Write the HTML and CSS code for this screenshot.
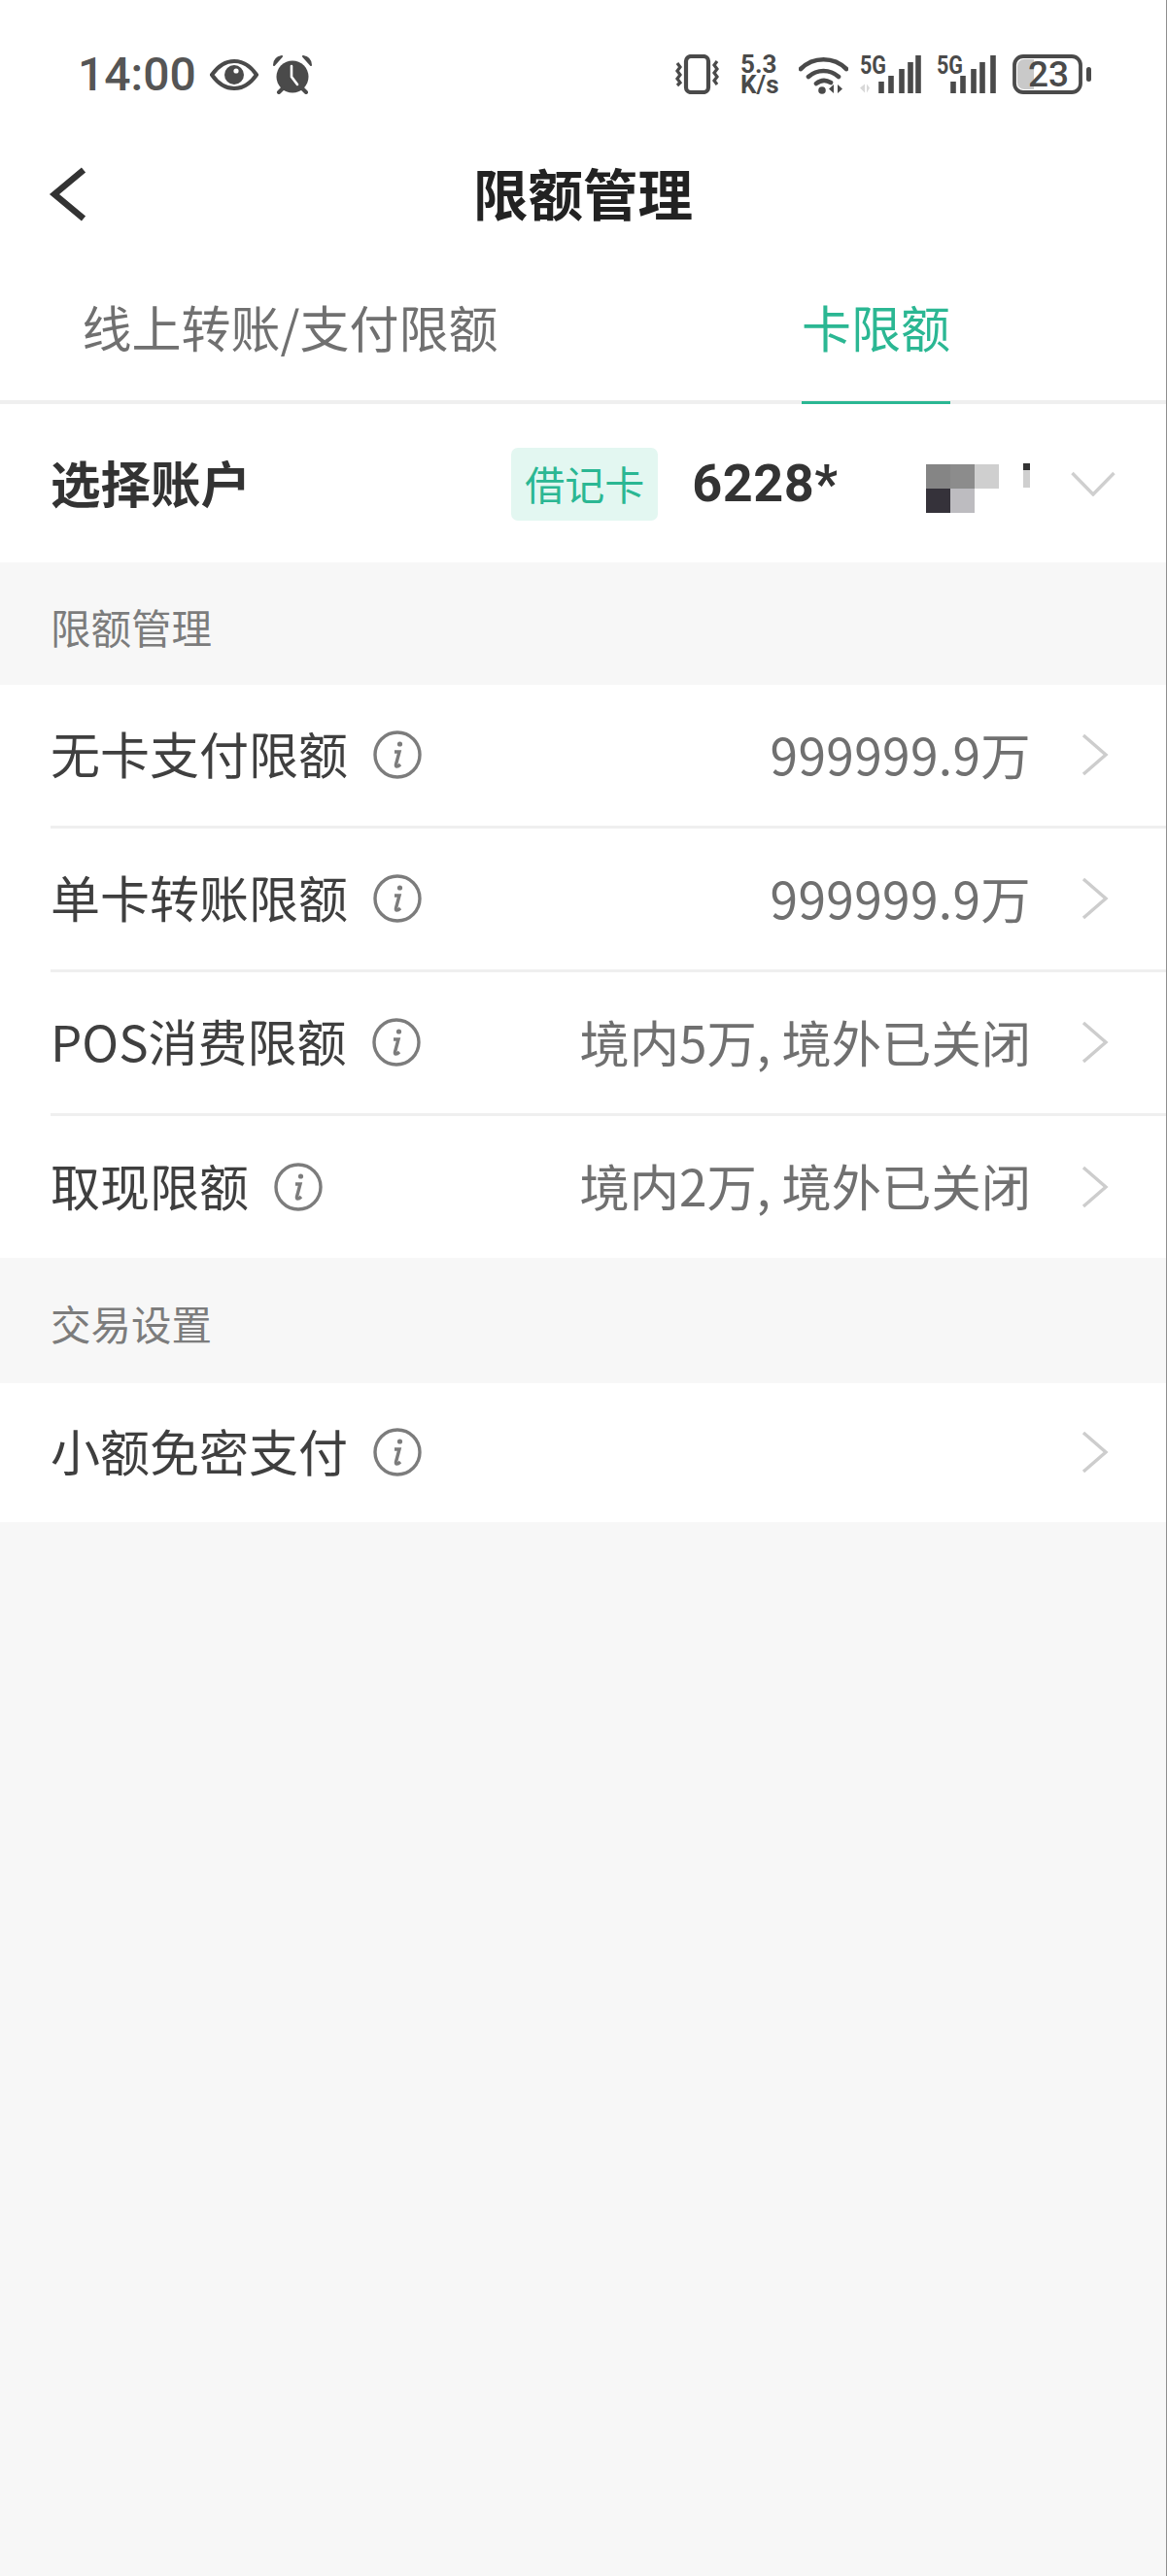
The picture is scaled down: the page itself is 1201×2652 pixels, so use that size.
FILE: index.html
```html
<!DOCTYPE html>
<html lang="zh-CN">
<head>
<meta charset="utf-8">
<title>限额管理</title>
<link rel="stylesheet" href="styles.css">
</head>
<body>
<div class="screen">
  <header class="status">
    <div class="status-left">
      <span class="clock">14:00</span>
      <svg class="ic-eye" viewBox="0 0 50 34"><path d="M2 17C9 7 16 3 25 3s16 4 23 14c-7 10-14 14-23 14S9 27 2 17z" fill="none" stroke="#4a4a4a" stroke-width="4"/><circle cx="25" cy="17" r="10" fill="#4a4a4a"/><circle cx="27" cy="13" r="2.6" fill="#fff"/></svg>
      <svg class="ic-alarm" viewBox="0 0 42 40"><circle cx="21" cy="22" r="16.500" fill="#4a4a4a"/><path d="M2 10C2 5 5 2 10 1zM40 10c0-5-3-8-8-9z" fill="#4a4a4a" stroke="#4a4a4a" stroke-width="2" stroke-linejoin="round"/><path d="M7 38l4-4M35 38l-4-4" stroke="#4a4a4a" stroke-width="4" stroke-linecap="round"/><path d="M20 11v11l6 8" fill="none" stroke="#fff" stroke-width="2.600" stroke-linecap="round"/></svg>
    </div>
    <div class="status-right">
      <svg class="ic-vibrate" viewBox="0 0 47 41"><rect x="12" y="2" width="23" height="37" rx="5" fill="none" stroke="#4a4a4a" stroke-width="4.200"/><path d="M3 9l3 4-3 4 3 4-3 4 3 4-3 3M44 7l-3 4 3 4-3 4 3 4-3 4 3 4" fill="none" stroke="#4a4a4a" stroke-width="3.200"/></svg>
      <span class="speed"><span>5.3</span><span>K/s</span></span>
      <svg class="ic-wifi" viewBox="0 0 51 40"><path d="M2 14C15 1 36 1 49 14M10 22c9-8 22-8 31 0M18 29c5-4 10-4 15-1" fill="none" stroke="#4a4a4a" stroke-width="4.600" stroke-linecap="round"/><circle cx="24" cy="36" r="3.800" fill="#4a4a4a"/><path d="M36 30v9l-5-4.500zM40 30v9l5-4.500z" fill="#4a4a4a"/></svg>
      <svg class="ic-sig-a" viewBox="0 0 66 41"><text class="net" x="0" y="20" textLength="27" lengthAdjust="spacingAndGlyphs">5G</text><path d="M0 34.500l5-4v9zM10 34.500l-3-4v9z" fill="#d8d8d8"/><path d="M22 28v12M32 22v18M43 15v25M52 8v32M60 1v39" stroke="#4a4a4a" stroke-width="5.600"/></svg>
      <svg class="ic-sig-b" viewBox="0 0 62 41"><text class="net" x="0" y="20" textLength="27" lengthAdjust="spacingAndGlyphs">5G</text><path d="M17 28v12M27 22v18M38 15v25M47 8v32M58 1v39" stroke="#4a4a4a" stroke-width="5.600"/></svg>
      <svg class="ic-battery" viewBox="0 0 81 41"><rect x="2" y="2" width="68" height="37" rx="9" fill="none" stroke="#4a4a4a" stroke-width="3.800"/><path d="M5 12a7 7 0 0 1 7-7h10v31H12a7 7 0 0 1-7-7z" fill="#c9c9c9"/><rect x="76" y="13" width="5" height="15" rx="2.500" fill="#4a4a4a"/><text class="charge" x="37" y="33" text-anchor="middle">23</text></svg>
    </div>
  </header>

  <nav class="nav">
    <svg class="back" viewBox="0 0 40 56"><path d="M36 3 6 28l30 25" fill="none" stroke="#333" stroke-width="6.500"/></svg>
    <h1 class="title">限额管理</h1>
  </nav>

  <div class="tabs">
    <div class="tab"><span class="tab-label">线上转账/支付限额</span></div>
    <div class="tab tab-active"><span class="tab-label">卡限额</span></div>
  </div>

  <section class="account">
    <span class="account-label">选择账户</span>
    <span class="badge">借记卡</span>
    <span class="card-no">6228*</span>
    <span class="mosaic">
      <i class="m1"></i><i class="m2"></i><i class="m3"></i>
      <i class="m4"></i><i class="m5"></i><i class="m6"></i>
    </span>
    <span class="mosaic-tail"></span>
    <svg class="caret-down" viewBox="0 0 46 26"><path d="M1.500 2 23 24 44.500 2" fill="none" stroke="#cfcfcf" stroke-width="3.400"/></svg>
  </section>

  <h2 class="group-title">限额管理</h2>
  <ul class="list">
    <li class="row">
      <span class="row-label">无卡支付限额</span>
      <svg class="info" viewBox="0 0 50 50"><use href="#info-glyph"/></svg>
      <span class="row-value row-amount">999999.9万</span>
      <svg class="caret" viewBox="0 0 28 44"><use href="#caret-glyph"/></svg>
    </li>
    <li class="row">
      <span class="row-label">单卡转账限额</span>
      <svg class="info" viewBox="0 0 50 50"><use href="#info-glyph"/></svg>
      <span class="row-value row-amount">999999.9万</span>
      <svg class="caret" viewBox="0 0 28 44"><use href="#caret-glyph"/></svg>
    </li>
    <li class="row">
      <span class="row-label">POS消费限额</span>
      <svg class="info" viewBox="0 0 50 50"><use href="#info-glyph"/></svg>
      <span class="row-value">境内5万, 境外已关闭</span>
      <svg class="caret" viewBox="0 0 28 44"><use href="#caret-glyph"/></svg>
    </li>
    <li class="row">
      <span class="row-label">取现限额</span>
      <svg class="info" viewBox="0 0 50 50"><use href="#info-glyph"/></svg>
      <span class="row-value">境内2万, 境外已关闭</span>
      <svg class="caret" viewBox="0 0 28 44"><use href="#caret-glyph"/></svg>
    </li>
  </ul>

  <h2 class="group-title">交易设置</h2>
  <ul class="list list-single">
    <li class="row">
      <span class="row-label">小额免密支付</span>
      <svg class="info" viewBox="0 0 50 50"><use href="#info-glyph"/></svg>
      <span class="row-value"></span>
      <svg class="caret" viewBox="0 0 28 44"><use href="#caret-glyph"/></svg>
    </li>
  </ul>
</div>

<!-- shared list glyphs -->
<svg class="defs" aria-hidden="true">
  <symbol id="info-glyph" viewBox="0 0 50 50">
    <circle cx="25" cy="25" r="23" fill="none" stroke="#7c7c7c" stroke-width="3.400"/>
    <circle cx="27.500" cy="14" r="2.600" fill="#7c7c7c"/>
    <path d="M22 22h5l-3.500 13c-.6 2.600 1.500 3 4.500 0" fill="none" stroke="#7c7c7c" stroke-width="3.400"/>
  </symbol>
  <symbol id="caret-glyph" viewBox="0 0 28 44">
    <path d="M2 2 25 22 2 42" fill="none" stroke="#cdcdcd" stroke-width="3.400"/>
  </symbol>
</svg>
</body>
</html>
```
FILE: styles.css
```css
* {
  box-sizing: border-box;
}

html,
body {
  margin: 0;
  padding: 0;
}

body {
  background: #f7f7f7;
  font-family: "Noto Sans CJK SC", "Noto Sans", sans-serif;
}

.screen {
  width: 1201px;
  height: 2652px;
  background: #f7f7f7;
  border-right: 1px solid #8f8f8f;
}

/* status bar */
.status {
  height: 140px;
  background: #fff;
  padding: 56px 77px 0 80px;
  display: flex;
  justify-content: space-between;
  align-items: flex-start;
}

.status-left,
.status-right {
  display: flex;
  align-items: center;
  height: 41px;
}

.clock {
  width: 136px;
  font-family: Roboto, sans-serif;
  font-weight: 500;
  font-size: 48px;
  line-height: 41px;
  color: #555;
}

.ic-eye {
  width: 50px;
  height: 34px;
}

.ic-alarm {
  width: 42px;
  height: 40px;
  margin-left: 14px;
}

.ic-vibrate {
  width: 47px;
  height: 41px;
}

.speed {
  display: flex;
  flex-direction: column;
  width: 42px;
  margin-left: 21px;
  font-family: Roboto, sans-serif;
  font-weight: 700;
  font-size: 26px;
  line-height: 21px;
  color: #4a4a4a;
}

.ic-wifi {
  width: 51px;
  height: 40px;
  margin-left: 18px;
}

.ic-sig-a {
  width: 66px;
  height: 41px;
  margin-left: 12px;
  overflow: visible;
}

.ic-sig-b {
  width: 62px;
  height: 41px;
  margin-left: 13px;
  overflow: visible;
}

.ic-battery {
  width: 81px;
  height: 41px;
  margin-left: 16px;
  overflow: visible;
}

.net {
  font-family: Roboto, sans-serif;
  font-weight: 700;
  font-size: 25px;
  fill: #4a4a4a;
}

.charge {
  font-family: Roboto, sans-serif;
  font-weight: 500;
  font-size: 37px;
  fill: #4a4a4a;
}

/* title bar */
.nav {
  height: 120px;
  background: #fff;
  display: flex;
  align-items: center;
  justify-content: center;
  position: relative;
}

.back {
  position: absolute;
  left: 50px;
  top: 32px;
  width: 40px;
  height: 56px;
}

.title {
  margin: 0 0 6px;
  font-size: 56.5px;
  font-weight: 700;
  line-height: 80px;
  color: #222;
}

/* tabs */
.tabs {
  height: 156px;
  background: #fff;
  border-bottom: 4px solid #efefef;
  display: flex;
}

.tab {
  flex: 1;
  display: flex;
  justify-content: center;
}

.tab-active {
  padding-left: 6px;
}

.tab-label {
  height: 156px;
  padding-top: 40px;
  font-size: 51px;
  line-height: 72px;
  color: #707070;
}

.tab-active .tab-label {
  color: #2bb793;
  border-bottom: 3px solid #2bb793;
}

/* account picker */
.account {
  height: 163px;
  background: #fff;
  padding: 0 52px;
  display: flex;
  align-items: center;
}

.account-label {
  width: 475px;
  margin-bottom: 4px;
  font-size: 51.5px;
  font-weight: 700;
  color: #333;
}

.badge {
  width: 151px;
  height: 75px;
  margin-top: 2px;
  border-radius: 7px;
  background: #e3f7f1;
  color: #2bb793;
  font-size: 41px;
  line-height: 72px;
  text-align: center;
}

.card-no {
  width: 149px;
  margin-left: 35px;
  overflow: hidden;
  font-family: Roboto, sans-serif;
  font-weight: 700;
  font-size: 54px;
  letter-spacing: 0.5px;
  color: #333;
  white-space: nowrap;
}

.mosaic {
  width: 75px;
  height: 50px;
  margin-top: 10px;
  margin-left: 92px;
  display: grid;
  grid-template-columns: repeat(3, 25px);
  grid-template-rows: repeat(2, 25px);
}

.mosaic i {
  display: block;
}

.m1 { background: #858585; }
.m2 { background: #8c8c8c; }
.m3 { background: #cfcfcf; }
.m4 { background: #35323a; }
.m5 { background: #bdbcc0; }
.m6 { background: #fff; }

.mosaic-tail {
  width: 7px;
  height: 25px;
  margin-left: 25px;
  align-self: flex-start;
  margin-top: 61px;
  background: linear-gradient(#333 0 7px, #cfcfcf 7px);
}

.caret-down {
  width: 46px;
  height: 26px;
  margin-left: 42px;
}

/* grouped lists */
.group-title {
  margin: 0;
  height: 126px;
  padding: 3px 0 0 52px;
  font-size: 41.5px;
  font-weight: 400;
  line-height: 126px;
  color: #7c7c7c;
}

.list + .group-title {
  height: 129px;
  line-height: 129px;
}

.list {
  margin: 0;
  list-style: none;
  background: #fff;
  padding: 0;
}

.row {
  height: 148px;
  margin-left: 52px;
  padding: 0 59px 1px 0;
  display: flex;
  align-items: center;
  border-bottom: 3px solid #efefef;
}

.row:last-child {
  height: 146px;
  padding-bottom: 1px;
  border-bottom: 0;
}

.list-single .row:last-child {
  height: 143px;
}

.row-label {
  margin-bottom: 4px;
  font-size: 51px;
  color: #3f3f3f;
}

.info {
  width: 50px;
  height: 50px;
  margin-left: 26px;
}

.row-value {
  margin-left: auto;
  margin-bottom: 4px;
  font-size: 51.3px;
  color: #707070;
}

.row-amount {
  letter-spacing: 0.4px;
}

.caret {
  width: 28px;
  height: 44px;
  margin-left: 52px;
}

.defs {
  display: none;
}
```
